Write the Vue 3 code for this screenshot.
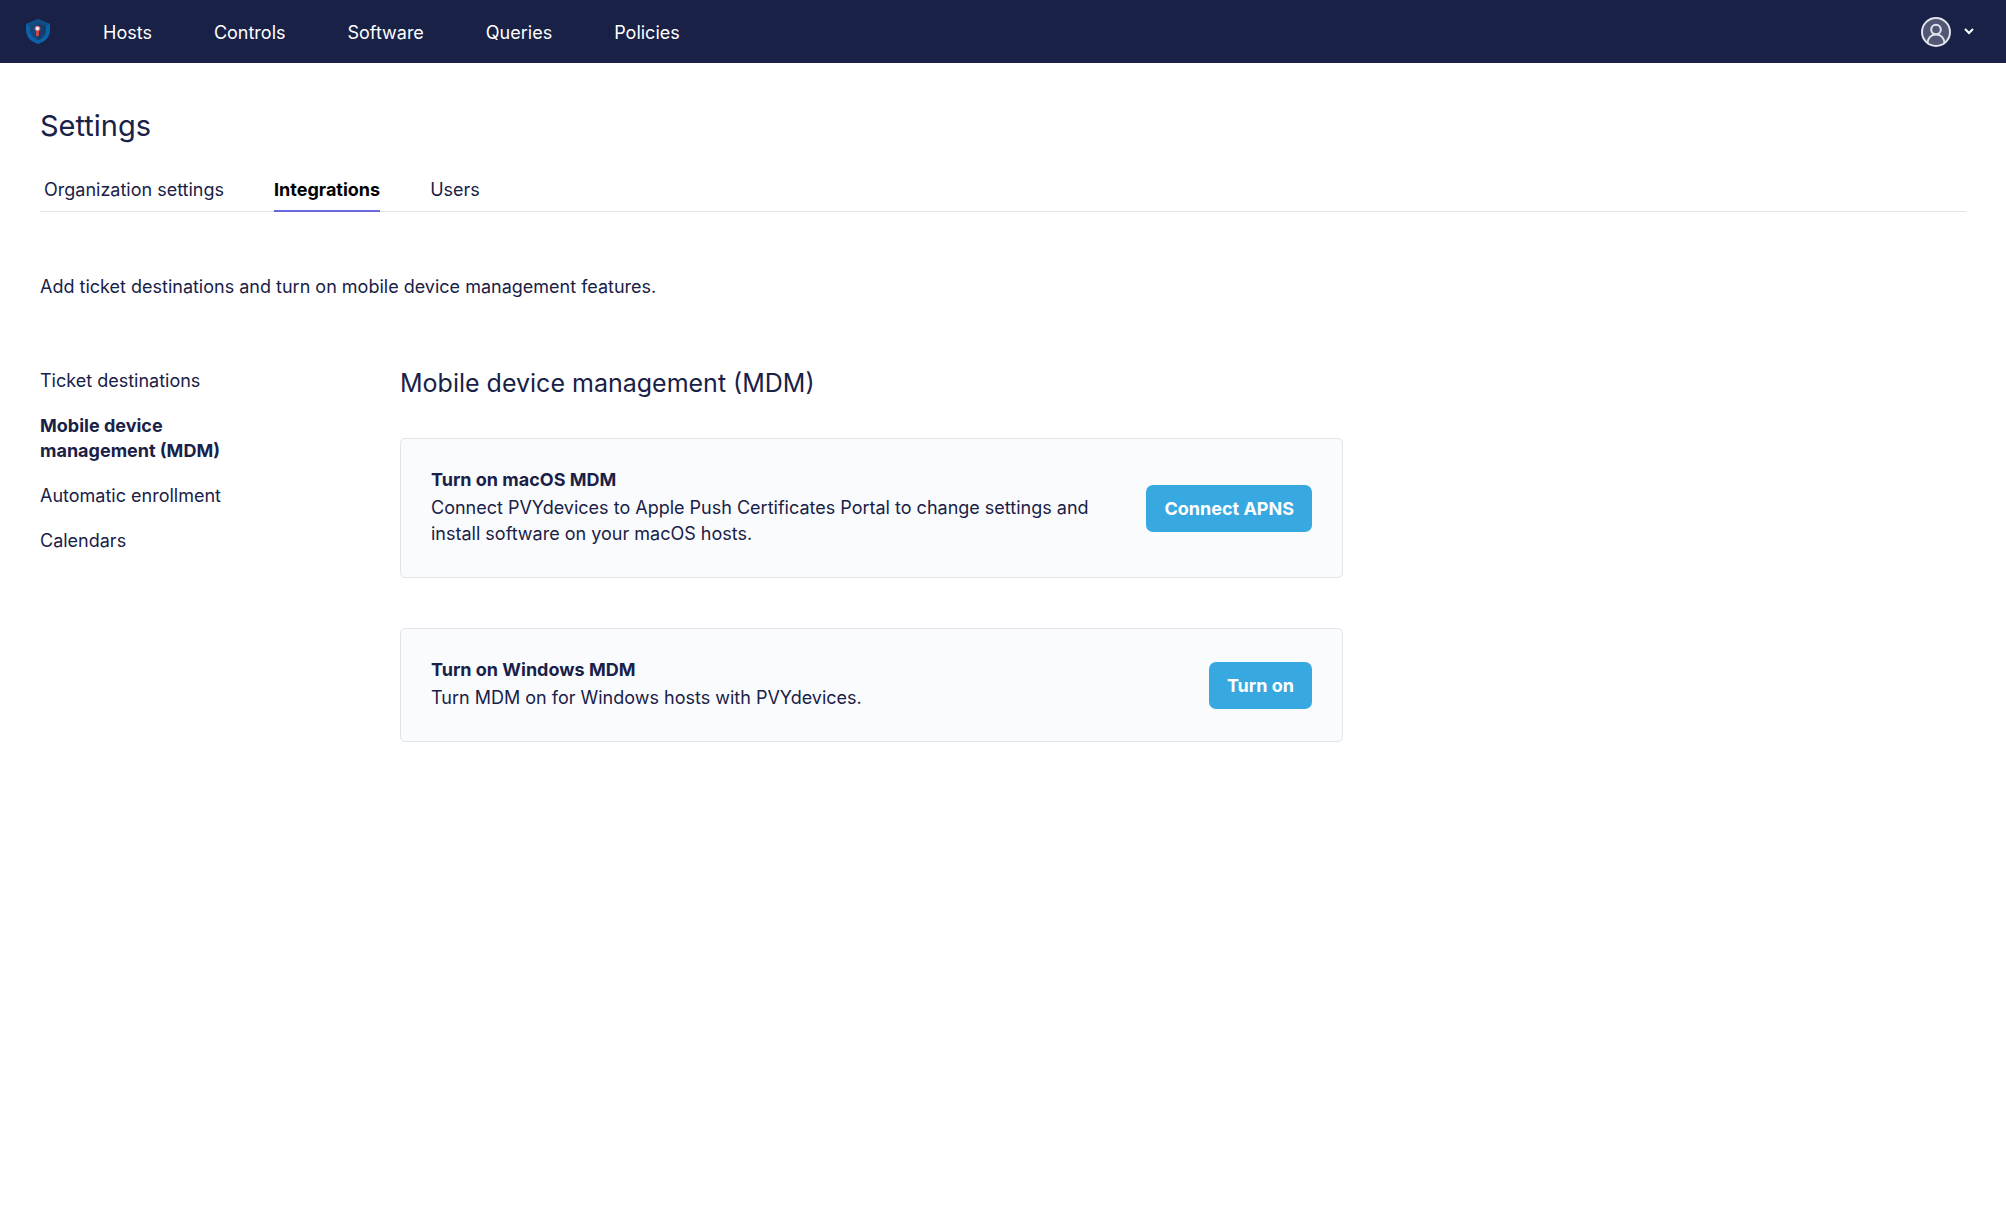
<script setup>
import { ref } from 'vue'

const navItems = ['Hosts', 'Controls', 'Software', 'Queries', 'Policies']
const tabs = ['Organization settings', 'Integrations', 'Users']
const activeTab = ref('Integrations')
const sections = [
  'Ticket destinations',
  'Mobile device management (MDM)',
  'Automatic enrollment',
  'Calendars',
]
const activeSection = ref('Mobile device management (MDM)')
</script>

<template>
  <div class="page">
    <header class="topbar">
      <a class="logo" href="#" aria-label="Home">
        <svg width="24" height="25" viewBox="0 0 24 25">
          <path d="M12 0 L24 5 V11 C24 18 19 23 12 25 C5 23 0 18 0 11 V5 Z" fill="#0b62a8" />
          <path d="M12 0 L24 5 L20 7 L12 4 L4 7 L0 5 Z" fill="#124e86" />
          <path d="M12 4 L20 7 V11 C20 15 17 19 12 21 C7 19 4 15 4 11 V7 Z" fill="#14487a" />
          <path d="M12 4 L20 7 V11 C20 15 17 19 12 21 Z" fill="#173c68" />
          <rect x="10" y="9" width="3" height="8" fill="#c6454c" />
          <circle cx="11.500" cy="9.500" r="2.800" fill="#e0686c" />
          <circle cx="11.500" cy="9.500" r="1.700" fill="#f7f1f4" />
        </svg>
      </a>
      <nav class="topnav" aria-label="Main">
        <a v-for="item in navItems" :key="item" href="#">{{ item }}</a>
      </nav>
      <button class="user" type="button" aria-label="Account menu">
        <svg width="30" height="30" viewBox="0 0 30 30" fill="none" stroke="#e3e4ed" stroke-width="2">
          <circle cx="15" cy="15" r="14" fill="#515774" />
          <circle cx="15" cy="12.500" r="4.800" />
          <path d="M6.500 26 C7 20.500 10.500 17.500 15 17.500 C19.500 17.500 23 20.500 23.500 26" />
        </svg>
        <svg width="10" height="7" viewBox="0 0 10 7" fill="none" stroke="#fff" stroke-width="2">
          <path d="M1 1 L5 5 L9 1" />
        </svg>
      </button>
    </header>

    <main class="content">
      <h1>Settings</h1>
      <nav class="tabs" aria-label="Settings">
        <a
          v-for="tab in tabs"
          :key="tab"
          href="#"
          :class="{ active: tab === activeTab }"
          @click.prevent="activeTab = tab"
        >{{ tab }}</a>
      </nav>
      <p class="intro">Add ticket destinations and turn on mobile device management features.</p>

      <div class="columns">
        <nav class="sidebar" aria-label="Integrations">
          <a
            v-for="section in sections"
            :key="section"
            href="#"
            :class="{ active: section === activeSection }"
            @click.prevent="activeSection = section"
          >{{ section }}</a>
        </nav>

        <section class="panel">
          <h2>Mobile device management (MDM)</h2>
          <article class="card">
            <div class="card-text">
              <h3>Turn on macOS MDM</h3>
              <p>Connect PVYdevices to Apple Push Certificates Portal to change settings and install software on your macOS hosts.</p>
            </div>
            <button class="primary" type="button">Connect APNS</button>
          </article>
          <article class="card">
            <div class="card-text">
              <h3>Turn on Windows MDM</h3>
              <p>Turn MDM on for Windows hosts with PVYdevices.</p>
            </div>
            <button class="primary" type="button">Turn on</button>
          </article>
        </section>
      </div>
    </main>
  </div>
</template>

<style>
body {
  margin: 0;
  background: #fff;
}
</style>

<style scoped>
.page {
  font-family: Inter, "Liberation Sans", sans-serif;
  font-size: 18px;
  line-height: 25px;
  color: #192147;
}
h1, h2, h3, p {
  margin: 0;
  font-weight: 400;
}
a {
  color: inherit;
  text-decoration: none;
}
button {
  border: 0;
  font: inherit;
  cursor: pointer;
}
.topbar {
  display: flex;
  align-items: center;
  height: 63px;
  padding: 0 32px 0 26px;
  box-sizing: border-box;
  background: #192147;
  color: #fff;
}
.logo {
  display: flex;
}
.topnav {
  display: flex;
  gap: 62px;
  margin-left: 53px;
  padding-top: 2px;
}
.user {
  display: flex;
  align-items: center;
  gap: 13px;
  margin-left: auto;
  padding: 0;
  background: none;
}
.content {
  padding: 43px 40px;
}
h1 {
  font-size: 29px;
  line-height: 40px;
}
.tabs {
  display: flex;
  gap: 50px;
  margin-top: 31px;
  padding-left: 4px;
  border-bottom: 1px solid #e2e4ea;
}
.tabs a {
  padding-bottom: 8px;
  border-bottom: 2px solid transparent;
  margin-bottom: -1px;
}
.tabs .active {
  border-color: #6a67dc;
  color: #000;
  font-weight: 700;
}
.intro {
  margin-top: 62px;
}
.columns {
  display: flex;
  margin-top: 69px;
}
.sidebar {
  display: flex;
  flex: 0 0 200px;
  flex-direction: column;
  gap: 20px;
  margin-right: 160px;
}
.sidebar .active {
  font-weight: 700;
}
.panel {
  flex: 0 1 943px;
}
h2 {
  font-size: 25px;
  line-height: 30px;
}
.card {
  display: flex;
  align-items: center;
  justify-content: space-between;
  gap: 30px;
  margin-top: 50px;
  padding: 30px;
  border: 1px solid #e2e4ea;
  border-radius: 5px;
  background: #fafbfd;
}
h2 + .card {
  margin-top: 40px;
}
.card h3 {
  margin-bottom: 5px;
  font-size: 18px;
  line-height: 21px;
  font-weight: 700;
}
.card p {
  line-height: 26px;
}
.primary {
  flex: none;
  height: 47px;
  padding: 0 18px;
  border-radius: 7px;
  background: #38a8e0;
  color: #fff;
  font-weight: 700;
}
</style>
